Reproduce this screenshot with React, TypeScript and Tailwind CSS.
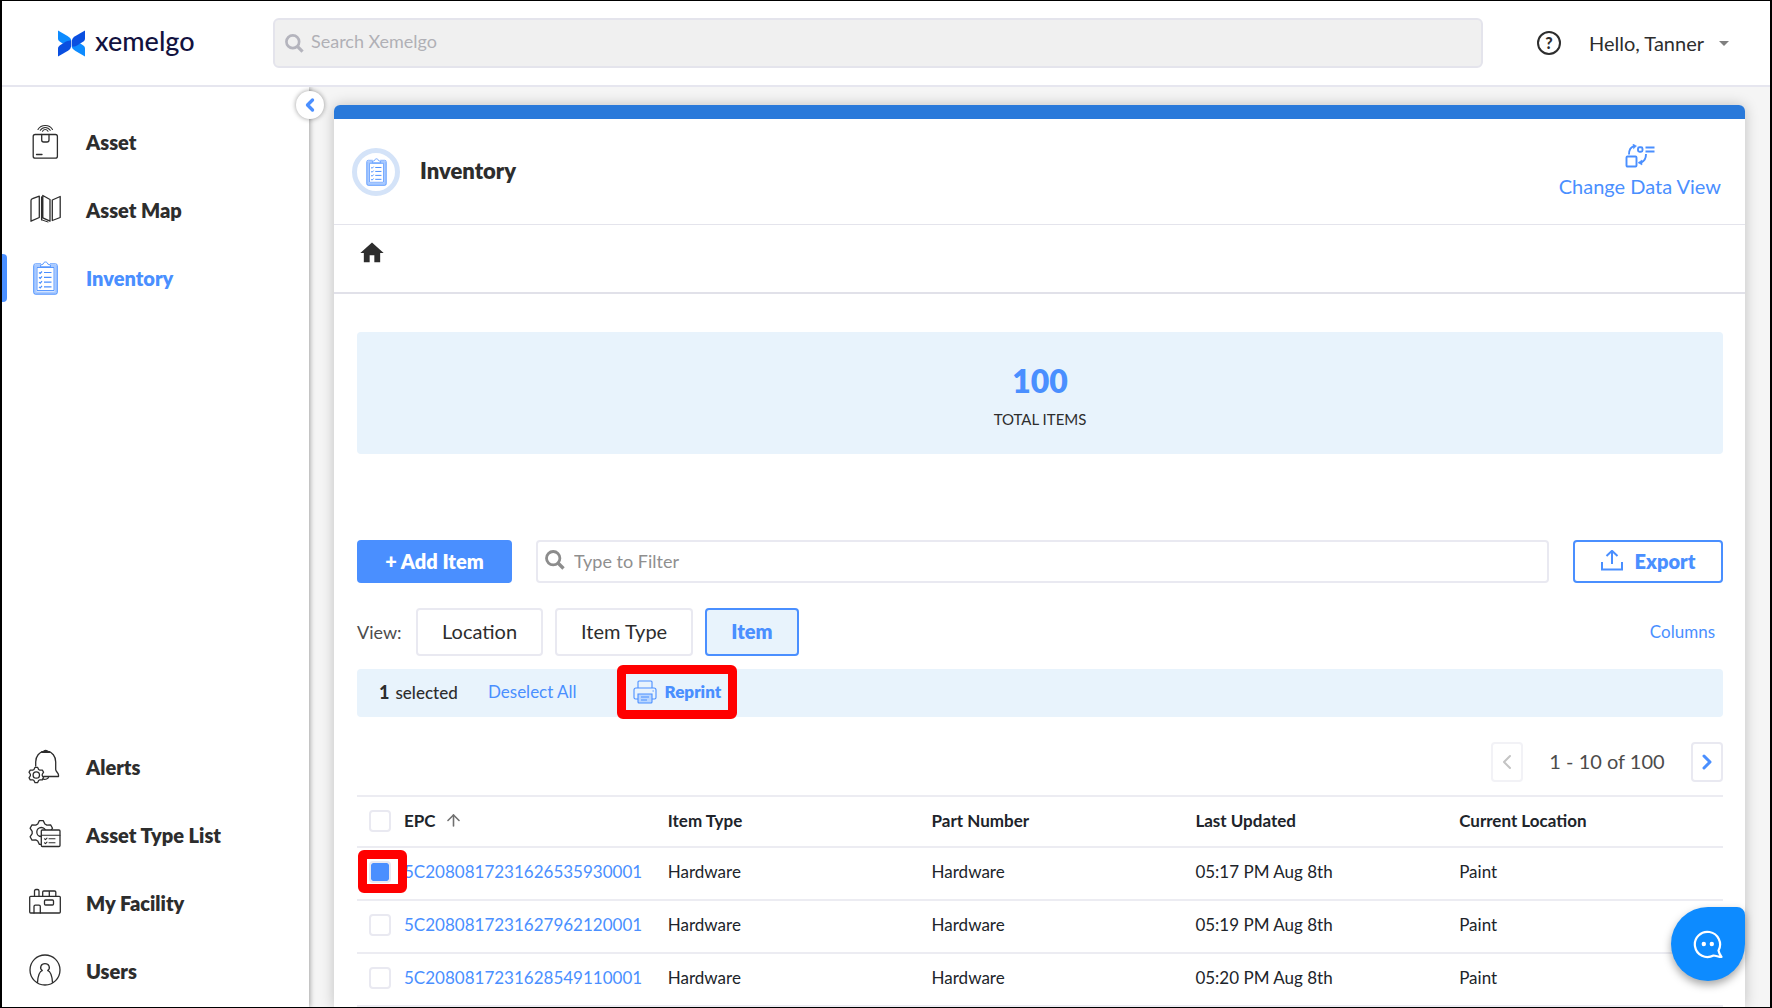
import React, { useState } from 'react'
import { ArrowUp, ChevronLeft, ChevronRight } from 'lucide-react';
import { MdArrowDropDown, MdHome } from 'react-icons/md';
import { twMerge } from 'tailwind-merge';

type IconProps = { className?: string };

const items = [
    { epc: '5C2080817231626535930001', type: 'Hardware', part: 'Hardware', updated: '05:17 PM Aug 8th', location: 'Paint' },
    { epc: '5C2080817231627962120001', type: 'Hardware', part: 'Hardware', updated: '05:19 PM Aug 8th', location: 'Paint' },
    { epc: '5C2080817231628549110001', type: 'Hardware', part: 'Hardware', updated: '05:20 PM Aug 8th', location: 'Paint' },
];

const views = ['Location', 'Item Type', 'Item'];

// six toothed gear outline
function gearPath(cx: number, cy: number, outer: number, inner: number) {
    const points: string[] = [];
    for (let i = 0; i < 6; i++) {
        const a = (i * Math.PI) / 3 - Math.PI / 2;
        [[-0.16, outer], [0.16, outer], [0.4, inner], [0.65, inner]].forEach(([d, r]) => {
            points.push(`${(cx + r * Math.cos(a + d)).toFixed(2)} ${(cy + r * Math.sin(a + d)).toFixed(2)}`);
        });
    }
    return `M${points.join('L')}Z`;
}

function LineIcon({ children }: { children: React.ReactNode }) {
    return (
        <svg viewBox="0 0 34 36" className="h-9 w-[34px] shrink-0" fill="none" stroke="currentColor" strokeWidth="1.3" strokeLinecap="round" strokeLinejoin="round" aria-hidden="true">
            {children}
        </svg>
    );
}

const AssetIcon = () => (
    <LineIcon>
        <path d="M10 5.500C13 .2 21.500 .2 24.500 5.500M12.300 6.300C14.800 2.500 19.700 2.500 22.200 6.300M14.500 7.200C16 4.900 18.500 4.900 20 7.200" strokeWidth="1.100" />
        <rect x="5.200" y="10.500" width="24.200" height="23.700" rx="2" />
        <path d="M13.700 10.500V16a2 2 0 0 0 2 2H19a2 2 0 0 0 2-2V10.500M8.500 30.500H14" />
    </LineIcon>
);

const MapIcon = () => (
    <LineIcon>
        <path d="M3 8.500C3 7.500 3.500 7 4.500 6.700L11.300 4.200V25.500L3 29.200ZM13.600 5V27.800M14.800 3.500L22 7.500V29.200L14.800 25.800ZM24.300 8L32.200 4.500V25.500L24.300 28.500Z" />
        <path d="M13.600 27.800L20 30" strokeWidth="1" />
    </LineIcon>
);

const ClipboardIcon = ({ className }: IconProps) => (
    <svg viewBox="0 0 25 34" className={className} fill="none" stroke="#4a8fff" aria-hidden="true">
        <rect x="2" y="5" width="21" height="27" rx="1" stroke="#a9caff" strokeWidth="3" />
        <path d="M8 2.800H2.500A1.800 1.800 0 0 0 .7 4.600V31.400A1.800 1.800 0 0 0 2.500 33.200H22.500A1.800 1.800 0 0 0 24.300 31.400V4.600A1.800 1.800 0 0 0 22.500 2.800H17" strokeWidth=".9" />
        <path d="M4 6.500H21V29.500H4Z" fill="#fff" strokeWidth=".9" />
        <path d="M7.500 5.800V4.200L10.300 3C10.500 .3 14.500 .3 14.700 3L17.500 4.200V5.800Z" fill="#fff" strokeWidth=".9" />
        <path d="M11 11.500H18.500M11 16.300H18.500M11 21.100H18.500M11 25.900H18.500M6 11.500l1.200 1L9 10.500M6 16.300l1.200 1L9 15.300M6 21.100l1.200 1L9 20.100M6 25.900l1.200 1L9 24.900" strokeWidth="1.200" />
    </svg>
);

const AlertIcon = () => (
    <LineIcon>
        <path d="M7.700 17V13C7.700 7 11.500 3.200 15.500 2.400C16 .9 19.300 .9 19.900 2.400C24 3.200 27.700 7 27.700 13V20.500C27.700 22.500 30.500 24 30.500 26V27.500H15.500M20.800 27.600C20.300 29.800 17.500 31 14.500 30" />
        <path d="M14 2.900H21.500" strokeWidth="2" />
        <path d={gearPath(8.3, 26, 7.8, 6)} />
        <circle cx="8.300" cy="26" r="3.200" />
    </LineIcon>
);

const TypeListIcon = () => (
    <LineIcon>
        <path d={gearPath(13.3, 15.5, 12, 9.2)} />
        <circle cx="13.300" cy="15" r="4.500" />
        <rect x="13.300" y="13" width="18.700" height="16.500" rx="1" fill="#fff" />
        <path d="M13.300 18.300H32M16.500 21.800l1 .8 1.500-1.500M21 21.800H27M16.500 25.800l1 .8 1.500-1.500M21 25.800H27" strokeWidth="1.100" />
    </LineIcon>
);

const FacilityIcon = () => (
    <LineIcon>
        <rect x="1.700" y="11.300" width="30.600" height="16.700" rx="1" />
        <path d="M6.500 11V6Q6.500 4.500 8 4.500H9.500Q11 4.500 11 6V11M14.700 11V7Q14.700 6 15.700 6H26.500Q27.800 6 27.800 7V11M21.300 6V11M6 28V21.500Q6 20.200 7.300 20.200H11Q12.300 20.200 12.300 21.500V28" />
        <rect x="16.500" y="15" width="9" height="5" rx="1" />
    </LineIcon>
);

const UserIcon = () => (
    <LineIcon>
        <circle cx="17" cy="17" r="15" />
        <path d="M14.300 17.500C11 15 13 10.700 17 10.700C21 10.700 23 15 19.700 17.500M14.300 17.500C11 18.500 10 22 9.500 29.500M19.700 17.500C23 18.500 24 22 24.500 29.500" />
    </LineIcon>
);

const SearchIcon = ({ className }: IconProps) => (
    <svg viewBox="0 0 20 20" className={className} fill="none" stroke="currentColor" strokeWidth="2.800" aria-hidden="true">
        <circle cx="8.200" cy="8.200" r="6.700" />
        <path d="M13 13L18.500 18.500" strokeWidth="3.400" />
    </svg>
);

const Logo = () => (
    <div className="flex items-center gap-[10px] text-[#12123f]">
        <svg viewBox="0 0 27 27" className="h-[27px] w-[27px]" aria-hidden="true">
            <path d="M0 .5L9.500 6C12 7.500 13.200 9 13.200 11L5 13.800L2 11.800C.5 10.800 0 9.800 0 8.500Z" fill="#0d8bff" />
            <path d="M27 26.500L17.500 21C15 19.500 13.800 18 13.800 16L22 13.200L25 15.200C26.500 16.200 27 17.200 27 18.500Z" fill="#0d8bff" />
            <path d="M0 26.500V18.500C0 17 .8 16 2 15.200L8 11.600C10 10.500 12 10.500 13.200 10.500V15C13.200 18 12 19.500 10 20.800Z" fill="#0a4fe0" />
            <path d="M27 .5V8.500C27 10 26.200 11 25 11.800L19 15.400C17 16.500 15 16.500 13.800 16.500V12C13.800 9 15 7.500 17 6.200Z" fill="#0a4fe0" />
        </svg>
        <span className="pb-1 text-[27px] leading-8 font-medium">xemelgo</span>
    </div>
);

const topNav = [
    { label: 'Asset', icon: <AssetIcon /> },
    { label: 'Asset Map', icon: <MapIcon /> },
    { label: 'Inventory', icon: <span className="flex w-[34px] justify-center"><ClipboardIcon className="h-[34px] w-[25px]" /></span>, active: true },
];

const bottomNav = [
    { label: 'Alerts', icon: <AlertIcon /> },
    { label: 'Asset Type List', icon: <TypeListIcon /> },
    { label: 'My Facility', icon: <FacilityIcon /> },
    { label: 'Users', icon: <UserIcon /> },
];

function NavItem({ label, icon, active = false }: { label: string; icon: React.ReactNode; active?: boolean }) {
    return (
        <a href="#" className={twMerge("relative flex h-12 items-center gap-6 pl-[26px] text-xl font-extrabold text-[#2d2d2d]", active && "text-[#4a8fff]")}>
            {active && <span className="absolute inset-y-0 left-0 w-[5px] rounded-r bg-[#4a8fff]" />}
            {icon}
            {label}
        </a>
    );
}

function Checkbox({ label, checked, onChange }: { label: string; checked: boolean; onChange: () => void }) {
    return (
        <input
            type="checkbox"
            aria-label={label}
            checked={checked}
            onChange={onChange}
            className="block h-[22px] w-[22px] appearance-none rounded border-2 border-[#e9e9f1] bg-white bg-clip-content checked:bg-[#4a8fff]"
        />
    );
}

export default function App() {
    const [view, setView] = useState('Item');
    const [selected, setSelected] = useState<string[]>([items[0].epc]);

    const toggle = (epc: string) =>
        setSelected(prev => prev.includes(epc) ? prev.filter(e => e !== epc) : [...prev, epc]);

    return (
        <div className="flex h-screen flex-col overflow-hidden border-x-2 border-y border-black bg-[#f5f5f5] font-['Lato',sans-serif] text-[#2d2d2d]">
            <header className="flex h-[86px] shrink-0 items-center border-b-2 border-[#e6e6ef] bg-white pl-14">
                <div className="w-[215px] shrink-0">
                    <Logo />
                </div>
                <div className="relative flex-1">
                    <SearchIcon className="absolute top-4 left-3 h-[19px] w-[19px] text-[#b4b4bd]" />
                    <input
                        type="text"
                        aria-label="Search Xemelgo"
                        placeholder="Search Xemelgo"
                        className="h-[50px] w-full rounded-md border-2 border-[#e4e4ec] bg-[#f0f0f0] pr-4 pb-1 pl-9 text-lg placeholder-[#b0b0b6] outline-none"
                    />
                </div>
                <div className="flex w-[287px] shrink-0 items-center pl-[54px]">
                    <button aria-label="Help" className="flex h-6 w-6 items-center justify-center rounded-full border-2 border-[#2d2d2d] text-base leading-4 font-black">?</button>
                    <button className="ml-7 flex items-center gap-2 text-xl">
                        Hello, Tanner
                        <MdArrowDropDown className="h-6 w-6 text-[#808080]" />
                    </button>
                </div>
            </header>

            <div className="flex min-h-0 flex-1">
                <aside className="relative z-10 flex w-[307px] shrink-0 flex-col justify-between bg-white pt-[31px] pb-3 shadow-[1px_0_5px_rgba(0,0,0,0.35)] [clip-path:inset(0_-20px_0_0)]">
                    <nav className="flex flex-col gap-5">
                        {topNav.map(item => <NavItem key={item.label} {...item} />)}
                    </nav>
                    <nav className="flex flex-col gap-5">
                        {bottomNav.map(item => <NavItem key={item.label} {...item} />)}
                    </nav>
                    <button aria-label="Collapse menu" className="absolute top-1 -right-[15px] flex h-7 w-7 items-center justify-center rounded-full bg-white text-[#4a8fff] shadow-[0_0_5px_rgba(0,0,0,0.4)]">
                        <ChevronLeft className="h-5 w-5" strokeWidth={4} />
                    </button>
                </aside>

                <main className="min-w-0 flex-1 px-[25px] pt-[18px]">
                    <div className="min-h-full rounded-t-md bg-white shadow-[0_0_14px_rgba(0,0,0,0.22)]">
                        <div className="h-[14px] rounded-t-md bg-[#2979da]" />
                        <div className="flex h-[106px] items-center justify-between border-b border-[#e4e4ec] pr-6 pl-[18px]">
                            <div className="flex items-center gap-5">
                                <span className="flex h-12 w-12 items-center justify-center rounded-full border-[5px] border-[#d4e3f8]">
                                    <ClipboardIcon className="h-7 w-[21px]" />
                                </span>
                                <h1 className="pb-0.5 text-[22px] leading-7 font-extrabold">Inventory</h1>
                            </div>
                            <button className="flex flex-col items-center gap-1 text-xl leading-7 text-[#4a8fff]">
                                <svg viewBox="0 0 30 24" className="h-6 w-[30px]" fill="none" stroke="currentColor" strokeWidth="1.900" aria-hidden="true">
                                    <rect x="1.500" y="12.500" width="10" height="10" rx="1" />
                                    <path d="M4 10.500C4 6 6 3 9 2.200M21 10C21 14.500 19 17.500 16 18.500M20.500 3.500H29.500M20.500 7.500H29.500" />
                                    <path d="M8 0L11.500 2L8.500 4.800ZM17 16L13 18.700L17 21Z" fill="currentColor" strokeWidth=".5" />
                                    <rect x="13" y="3.300" width="4.500" height="4.500" rx="1.500" />
                                </svg>
                                Change Data View
                            </button>
                        </div>
                        <div className="flex h-[69px] items-center border-b-2 border-[#e1e1e9] pb-3 pl-6">
                            <a href="#" aria-label="Home"><MdHome className="h-7 w-7" /></a>
                        </div>

                        <div className="pt-[38px] pr-[22px] pl-[23px]">
                            <div className="flex h-[122px] flex-col items-center justify-center gap-2 rounded bg-[#e8f3fc] pt-2">
                                <p className="text-[32px] leading-9 font-extrabold text-[#4a8fff]">100</p>
                                <p className="text-[15px] leading-6">TOTAL ITEMS</p>
                            </div>

                            <div className="mt-[86px] flex h-[43px] items-stretch gap-6">
                                <button className="w-[155px] rounded bg-[#4a8fff] pb-0.5 text-xl font-extrabold text-white">+ Add Item</button>
                                <div className="relative flex-1">
                                    <SearchIcon className="absolute top-[10px] left-[9px] h-5 w-5 text-[#8c8c8c]" />
                                    <input
                                        type="text"
                                        aria-label="Type to Filter"
                                        placeholder="Type to Filter"
                                        className="h-full w-full rounded border-2 border-[#e9e9f1] pb-0.5 pl-9 text-lg placeholder-[#8f8f8f] outline-none"
                                    />
                                </div>
                                <button className="flex w-[150px] items-center justify-center gap-3 rounded border-2 border-[#4a8fff] pb-0.5 text-xl font-extrabold text-[#4a8fff]">
                                    <svg viewBox="0 0 22 22" className="h-[22px] w-[22px]" fill="none" stroke="currentColor" strokeWidth="2" aria-hidden="true">
                                        <path d="M1 12V19.500H21V12M11 14V1M5.500 6L11 .8L16.500 6" />
                                    </svg>
                                    Export
                                </button>
                            </div>

                            <div className="mt-[25px] flex h-12 items-center">
                                <span className="w-[59px] text-lg text-[#4c4c4c]">View:</span>
                                <div className="flex h-full gap-3">
                                    {views.map(name => (
                                        <button
                                            key={name}
                                            onClick={() => setView(name)}
                                            className={twMerge("rounded border-2 border-[#e9e9f1] px-6 pb-0.5 text-xl", view === name && "border-[#4a8fff] bg-[#e8f3fc] font-extrabold text-[#4a8fff]")}
                                        >
                                            {name}
                                        </button>
                                    ))}
                                </div>
                                <button className="mr-2 ml-auto text-[17px] text-[#4a8fff]">Columns</button>
                            </div>

                            <div className="mt-[13px] flex h-12 items-center rounded bg-[#e8f3fc] pb-0.5 pl-[22px] text-[17px]">
                                <p className="w-[109px] font-medium"><b className="mr-1.5 text-lg font-black">{selected.length}</b>selected</p>
                                <button className="text-[#4a8fff]" onClick={() => setSelected([])}>Deselect All</button>
                                <button className="relative ml-14 flex items-center gap-2 font-extrabold text-[#4a8fff]">
                                    <svg viewBox="0 0 24 24" className="h-6 w-6" fill="none" stroke="currentColor" strokeWidth="1.100" aria-hidden="true">
                                        <path d="M5 8V2Q5 1 6 1H18Q19 1 19 2V8M5 19H2.500Q1 19 1 17.500V10Q1 8 3 8H21Q23 8 23 10V17.500Q23 19 21.500 19H19" />
                                        <path d="M5 14H19V22Q19 23 18 23H6Q5 23 5 22Z" fill="#b9d6ff" />
                                        <path d="M8 17H16M8 20H14M19.500 11H20.800" />
                                    </svg>
                                    Reprint
                                    <span className="absolute -inset-x-4 -inset-y-[14px] rounded-md border-[9px] border-[#ff0000]" />
                                </button>
                            </div>

                            <div className="mt-[25px] flex h-10 items-stretch justify-end text-xl">
                                <button aria-label="Previous page" disabled className="flex w-8 items-center justify-center rounded border-2 border-[#f2f2f6] text-[#c4c4c4]">
                                    <ChevronLeft className="h-6 w-6" strokeWidth={2} />
                                </button>
                                <span className="w-[168px] self-center pb-0.5 text-center text-[#4c4c4c]">1 - 10 of 100</span>
                                <button aria-label="Next page" className="flex w-8 items-center justify-center rounded border-2 border-[#e9e9f1] text-[#4a8fff]">
                                    <ChevronRight className="h-6 w-6" strokeWidth={3} />
                                </button>
                            </div>

                            <table className="mt-[13px] w-full table-fixed border-t-2 border-[#ececf2] text-left text-[17px] text-[#20242a]">
                                <thead>
                                    <tr className="h-[51px] border-b-2 border-[#ececf2] font-extrabold *:pb-0.5">
                                        <th className="w-[47px] pl-3">
                                            <Checkbox label="Select all" checked={false} onChange={() => setSelected(items.map(i => i.epc))} />
                                        </th>
                                        <th>
                                            <span className="flex items-center gap-2">EPC <ArrowUp className="h-[19px] w-[19px] text-[#707070]" strokeWidth={2} /></span>
                                        </th>
                                        <th>Item Type</th>
                                        <th>Part Number</th>
                                        <th>Last Updated</th>
                                        <th>Current Location</th>
                                    </tr>
                                </thead>
                                <tbody>
                                    {items.map((item, index) => (
                                        <tr key={item.epc} className="h-[53px] border-b-2 border-[#ececf2] *:pb-1">
                                            <td className="relative pl-3">
                                                <Checkbox label={`Select ${item.epc}`} checked={selected.includes(item.epc)} onChange={() => toggle(item.epc)} />
                                                {index === 0 && <span className="pointer-events-none absolute top-0.5 left-px z-10 h-[43px] w-[49px] rounded-md border-[9px] border-[#ff0000]" />}
                                            </td>
                                            <td><a href="#" className="text-[#4a8fff]">{item.epc}</a></td>
                                            <td>{item.type}</td>
                                            <td>{item.part}</td>
                                            <td>{item.updated}</td>
                                            <td>{item.location}</td>
                                        </tr>
                                    ))}
                                </tbody>
                            </table>
                        </div>
                    </div>
                </main>
            </div>

            <button aria-label="Open chat" className="fixed right-[27px] bottom-[27px] z-20 flex h-[74px] w-[74px] items-center justify-center rounded-[37px] rounded-tr-lg bg-[#0d8bff] shadow-[0_4px_8px_rgba(0,0,0,0.35)]">
                <svg viewBox="0 0 30 30" className="h-[30px] w-[30px]" fill="none" stroke="#fff" strokeWidth="2.200" strokeLinejoin="round" aria-hidden="true">
                    <path d="M25.500 21.500A12.600 12.600 0 1 0 20.500 26.500C23 26.500 25.500 28 28.500 28C27 26 26 24 25.500 21.500Z" />
                    <circle cx="10.800" cy="15" r="2.200" fill="#fff" stroke="none" />
                    <circle cx="18.800" cy="15" r="2.200" fill="#fff" stroke="none" />
                </svg>
            </button>
        </div>
    );
}
